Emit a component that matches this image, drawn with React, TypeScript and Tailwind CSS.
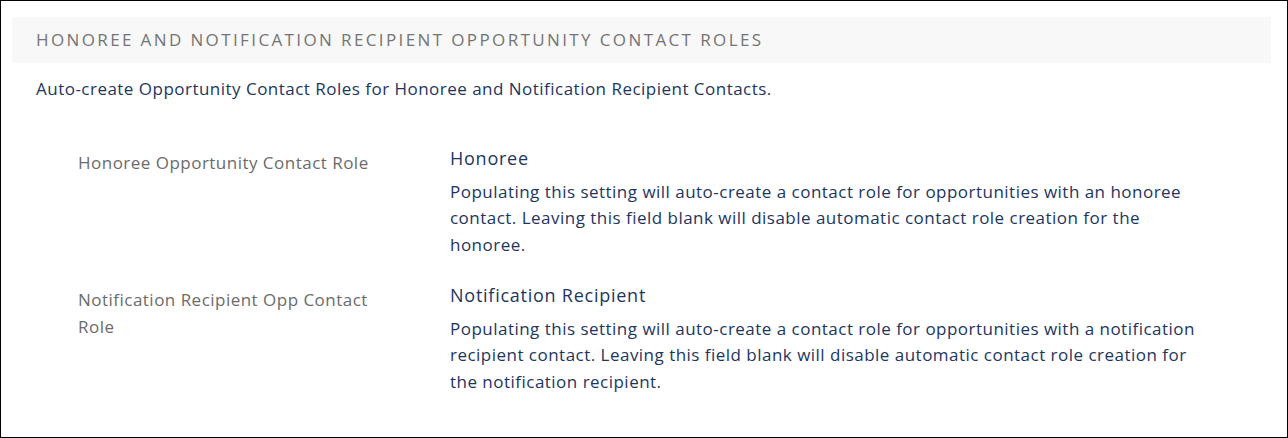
export default function App() {
  const rows = [
    {
      label: "Honoree Opportunity Contact Role",
      value: "Honoree",
      help: "Populating this setting will auto-create a contact role for opportunities with an honoree contact. Leaving this field blank will disable automatic contact role creation for the honoree.",
    },
    {
      label: "Notification Recipient Opp Contact Role",
      value: "Notification Recipient",
      help: "Populating this setting will auto-create a contact role for opportunities with a notification recipient contact. Leaving this field blank will disable automatic contact role creation for the notification recipient.",
    },
  ];

  return (
    <div
      className="w-[1288px] h-[438px] border border-black bg-white pt-4 pl-[11px] pr-4"
      style={{ fontFamily: '"Open Sans", "Noto Sans", sans-serif' }}
    >
      <div className="h-[46px] bg-[#f8f8f8] flex items-center pl-6">
        <h2 className="text-[17px] tracking-[2.38px] text-[#747474] uppercase">
          Honoree and Notification Recipient Opportunity Contact Roles
        </h2>
      </div>
      <p className="pl-6 mt-[14px] text-[17px] tracking-[0.48px] leading-[24px] text-[#1d3660]">
        Auto-create Opportunity Contact Roles for Honoree and Notification Recipient Contacts.
      </p>
      <div className="mt-[41px] flex flex-col gap-[21px]">
        {rows.map((r) => (
          <div key={r.label} className="flex">
            <div className="w-[438px] shrink-0 pl-[66px] pr-[62px] pt-[7px]">
              <div className="text-[17px] tracking-[0.48px] leading-[27px] text-[#6b6b6b]">
                {r.label}
              </div>
            </div>
            <div className="w-[752px]">
              <div className="text-[18px] tracking-[0.75px] leading-[32px] text-[#1d3660]">
                {r.value}
              </div>
              <div className="mt-[4.5px] text-[17px] tracking-[0.48px] leading-[26.5px] text-[#1d3660]">
                {r.help}
              </div>
            </div>
          </div>
        ))}
      </div>
    </div>
  );
}
